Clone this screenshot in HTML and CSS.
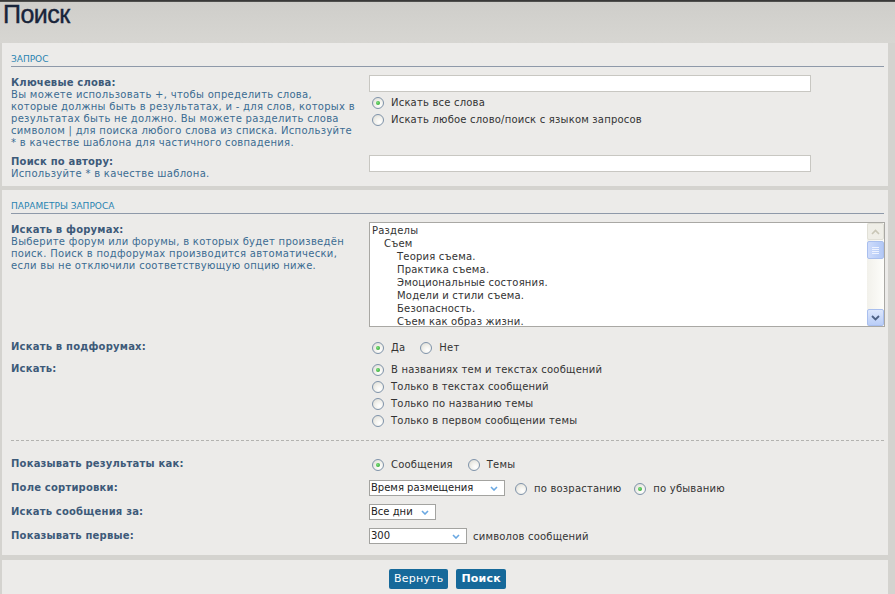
FILE: index.html
```html
<!DOCTYPE html>
<html lang="ru">
<head>
<meta charset="utf-8">
<title>Поиск</title>
<link rel="stylesheet" href="styles.css">
</head>
<body>
<div class="topbar"></div>
<header class="head"><h1>Поиск</h1></header>

<section class="panel p1">
  <h3 class="sect">Запрос</h3>
  <div class="row r-kw">
    <div class="lab"><b>Ключевые слова:</b><span class="desc">Вы можете использовать +, чтобы определить слова,<br>которые должны быть в результатах, и - для слов, которых в<br>результатах быть не должно. Вы можете разделить слова<br>символом | для поиска любого слова из списка. Используйте<br>* в качестве шаблона для частичного совпадения.</span></div>
    <div class="ctl">
      <input class="text" type="text">
      <div class="line"><span class="opt"><span class="radio on"></span>Искать все слова</span></div>
      <div class="line"><span class="opt"><span class="radio"></span>Искать любое слово/поиск с языком запросов</span></div>
    </div>
  </div>
  <div class="row r-author">
    <div class="lab"><b>Поиск по автору:</b><span class="desc">Используйте * в качестве шаблона.</span></div>
    <div class="ctl"><input class="text t2" type="text"></div>
  </div>
</section>

<section class="panel p2">
  <h3 class="sect">Параметры запроса</h3>
  <div class="row r-forums">
    <div class="lab"><b>Искать в форумах:</b><span class="desc">Выберите форум или форумы, в которых будет произведён<br>поиск. Поиск в подфорумах производится автоматически,<br>если вы не отключили соответствующую опцию ниже.</span></div>
    <div class="ctl">
      <div class="listbox">
        <div class="items">
          <div class="it">Разделы</div>
          <div class="it l1">Съем</div>
          <div class="it l2">Теория съема.</div>
          <div class="it l2">Практика съема.</div>
          <div class="it l2">Эмоциональные состояния.</div>
          <div class="it l2">Модели и стили съема.</div>
          <div class="it l2">Безопасность.</div>
          <div class="it l2">Съем как образ жизни.</div>
        </div>
        <div class="sbar">
          <div class="sbtn up"><svg width="9" height="6" viewBox="0 0 9 6"><path d="M1 5 L4.5 1.5 L8 5" fill="none" stroke="#c9c6b6" stroke-width="1.6"/></svg></div>
          <div class="thumb"><i></i><i></i><i></i><i></i></div>
          <div class="track"></div>
          <div class="sbtn down"><svg width="9" height="6" viewBox="0 0 9 6"><path d="M1 1 L4.5 4.5 L8 1" fill="none" stroke="#4d6185" stroke-width="1.8"/></svg></div>
        </div>
      </div>
    </div>
  </div>
  <div class="row r-sub">
    <div class="lab"><b>Искать в подфорумах:</b></div>
    <div class="ctl"><div class="line"><span class="opt"><span class="radio on"></span>Да</span><span class="opt"><span class="radio"></span>Нет</span></div></div>
  </div>
  <div class="row r-in">
    <div class="lab"><b>Искать:</b></div>
    <div class="ctl">
      <div class="line"><span class="opt"><span class="radio on"></span>В названиях тем и текстах сообщений</span></div>
      <div class="line"><span class="opt"><span class="radio"></span>Только в текстах сообщений</span></div>
      <div class="line"><span class="opt"><span class="radio"></span>Только по названию темы</span></div>
      <div class="line"><span class="opt"><span class="radio"></span>Только в первом сообщении темы</span></div>
    </div>
  </div>
  <hr class="dash">
  <div class="row r-res">
    <div class="lab"><b>Показывать результаты как:</b></div>
    <div class="ctl"><div class="line"><span class="opt"><span class="radio on"></span>Сообщения</span><span class="opt"><span class="radio"></span>Темы</span></div></div>
  </div>
  <div class="row sel-row r-sort">
    <div class="lab"><b>Поле сортировки:</b></div>
    <div class="ctl">
      <div class="select s-sort"><span>Время размещения</span><svg width="8" height="5" viewBox="0 0 8 5"><path d="M1 1 L4 4 L7 1" fill="none" stroke="#6aa8e2" stroke-width="1.6"/></svg></div>
      <span class="opt o-asc"><span class="radio"></span>по возрастанию</span>
      <span class="opt"><span class="radio on"></span>по убыванию</span>
    </div>
  </div>
  <div class="row sel-row r-days">
    <div class="lab"><b>Искать сообщения за:</b></div>
    <div class="ctl">
      <div class="select s-days"><span>Все дни</span><svg width="8" height="5" viewBox="0 0 8 5"><path d="M1 1 L4 4 L7 1" fill="none" stroke="#6aa8e2" stroke-width="1.6"/></svg></div>
    </div>
  </div>
  <div class="row sel-row r-first">
    <div class="lab"><b>Показывать первые:</b></div>
    <div class="ctl">
      <div class="select s-first"><span>300</span><svg width="8" height="5" viewBox="0 0 8 5"><path d="M1 1 L4 4 L7 1" fill="none" stroke="#6aa8e2" stroke-width="1.6"/></svg></div>
      <span class="after">символов сообщений</span>
    </div>
  </div>
</section>

<section class="panel p3">
  <button class="btn" type="button">Вернуть</button><button class="btn bold" type="button">Поиск</button>
</section>
</body>
</html>
```

FILE: styles.css
```css
* { box-sizing: border-box; }
html, body { margin: 0; }
body {
  background: #d4d3cf;
  font-family: "DejaVu Sans", Verdana, sans-serif;
  font-size: 10px;
  letter-spacing: 0.2px;
  color: #333;
  width: 895px;
  height: 594px;
  overflow: hidden;
}
.topbar { height: 2px; background: linear-gradient(#2e2e2e, #5a5a58); }
.head {
  height: 41px;
  background: linear-gradient(#cfceca, #d7d6d2);
  padding: 0 3px;
}
.head h1 {
  margin: 0;
  font: normal 25px/24px "Liberation Sans", Arial, sans-serif;
  letter-spacing: -0.5px;
  color: #18243a;
  -webkit-text-stroke: 0.4px #18243a;
}
.panel {
  background: #ecebe9;
  margin: 0 7px 0 2px;
  padding: 0 4px 0 9px;
}
.p1 { padding-bottom: 6px; }
.p2 { margin-top: 4px; padding-bottom: 11px; }
.p3 { margin-top: 5px; padding-top: 9px; height: 40px; text-align: center; }
.sect {
  margin: 0;
  padding-top: 10px;
  font: normal 9px/13px "DejaVu Sans", Verdana, sans-serif;
  letter-spacing: 0;
  text-transform: uppercase;
  color: #2883b1;
  border-bottom: 1px solid #8e99a9;
}
.row {
  display: grid;
  grid-template-columns: 352px 1fr;
  column-gap: 6px;
}
.lab { padding-top: 1px; }
.lab b {
  display: block;
  line-height: 13px;
  color: #3d5a79;
}
.lab .desc {
  display: block;
  line-height: 12px;
  color: #3b6b92;
  letter-spacing: 0.3px;
  white-space: nowrap;
}
.r-kw { margin-top: 8px; }
.r-author { margin-top: 5px; }
.r-author .ctl { padding-top: 1px; }
.r-forums { margin-top: 8px; }
.r-sub { margin-top: 12px; }
.r-in { margin-top: 5px; }
.r-res { margin-top: 15px; }
.r-sort { margin-top: 7px; }
.r-days, .r-first { margin-top: 8px; }
.r-in .lab, .r-res .lab { padding-top: 1px; }

.text {
  display: block;
  width: 442px;
  height: 17px;
  margin: 0 0 2px;
  padding: 0 2px;
  border: 1px solid #c8c7c2;
  background: #fff;
  font: 10px "DejaVu Sans", sans-serif;
}
.line {
  height: 17px;
  display: flex;
  align-items: center;
}
.opt {
  display: inline-flex;
  align-items: center;
  color: #333;
  line-height: 17px;
}
.opt + .opt { margin-left: 12px; }
.radio {
  width: 12px;
  height: 12px;
  margin: 1px 7px 0 3px;
  border-radius: 50%;
  border: 1px solid #7f93aa;
  background: radial-gradient(circle at 65% 70%, #ffffff 0%, #f2f1ec 45%, #d9d8d0 100%);
  position: relative;
  flex: none;
}
.radio.on::after {
  content: "";
  position: absolute;
  left: 3px;
  top: 3px;
  width: 4px;
  height: 4px;
  border-radius: 50%;
  background: radial-gradient(circle at 40% 40%, #7fe07f, #1f9a1f);
}

.listbox {
  display: flex;
  width: 516px;
  height: 105px;
  border: 1px solid #a9a8a4;
  background: #fff;
  overflow: hidden;
}
.items { flex: 1; padding: 1px 0 0 2px; }
.it { line-height: 13px; color: #333; white-space: nowrap; }
.it.l1 { padding-left: 12px; }
.it.l2 { padding-left: 25px; }
.sbar {
  width: 17px;
  display: flex;
  flex-direction: column;
  background: linear-gradient(to right, #f2f1eb, #fdfdfa);
}
.sbtn {
  height: 17px;
  border-radius: 2px;
  display: flex;
  align-items: center;
  justify-content: center;
  flex: none;
}
.sbtn.up { background: #efeee7; border: 1px solid #e1e0d7; }
.sbtn.down { background: linear-gradient(#dde7fc, #b9cdf7); border: 1px solid #a9bfee; }
.thumb {
  height: 18px;
  margin-top: 1px;
  border-radius: 2px;
  border: 1px solid #a9bfee;
  background: linear-gradient(to right, #cfdcfb, #bcd0f8 60%, #b3c8f5);
  display: flex;
  flex-direction: column;
  justify-content: center;
  align-items: center;
  gap: 1px;
  flex: none;
}
.thumb i {
  display: block;
  width: 7px;
  height: 1px;
  background: #8aa6e4;
  border-bottom: 1px solid #eef3ff;
}
.track { flex: 1; }

.dash {
  margin: 11px 0 0;
  border: 0;
  border-top: 1px dashed #b3b3b0;
  height: 0;
}
.sel-row .lab { padding-top: 0; }
.sel-row .lab b { line-height: 15px; }
.sel-row .ctl { display: flex; align-items: center; height: 16px; }
.select {
  height: 16px;
  border: 1px solid #a3a3a0;
  background: #fff;
  display: flex;
  align-items: center;
  justify-content: space-between;
  padding: 0 6px 0 1px;
  color: #222;
  letter-spacing: 0;
  flex: none;
}
.select span { line-height: 14px; }
.s-sort { width: 136px; margin-right: 7px; }
.s-days { width: 67px; }
.s-first { width: 98px; margin-right: 6px; }
.after { color: #333; }
.sel-row .opt + .opt { margin-left: 10px; }

.btn {
  height: 20px;
  padding: 0 5px;
  margin: 0 4px;
  border: 0;
  border-radius: 2px;
  background: #16699a;
  color: #fff;
  font: 11px/20px "DejaVu Sans", Verdana, sans-serif;
  letter-spacing: 0.2px;
  vertical-align: top;
}
.btn.bold { font-weight: bold; }
```
